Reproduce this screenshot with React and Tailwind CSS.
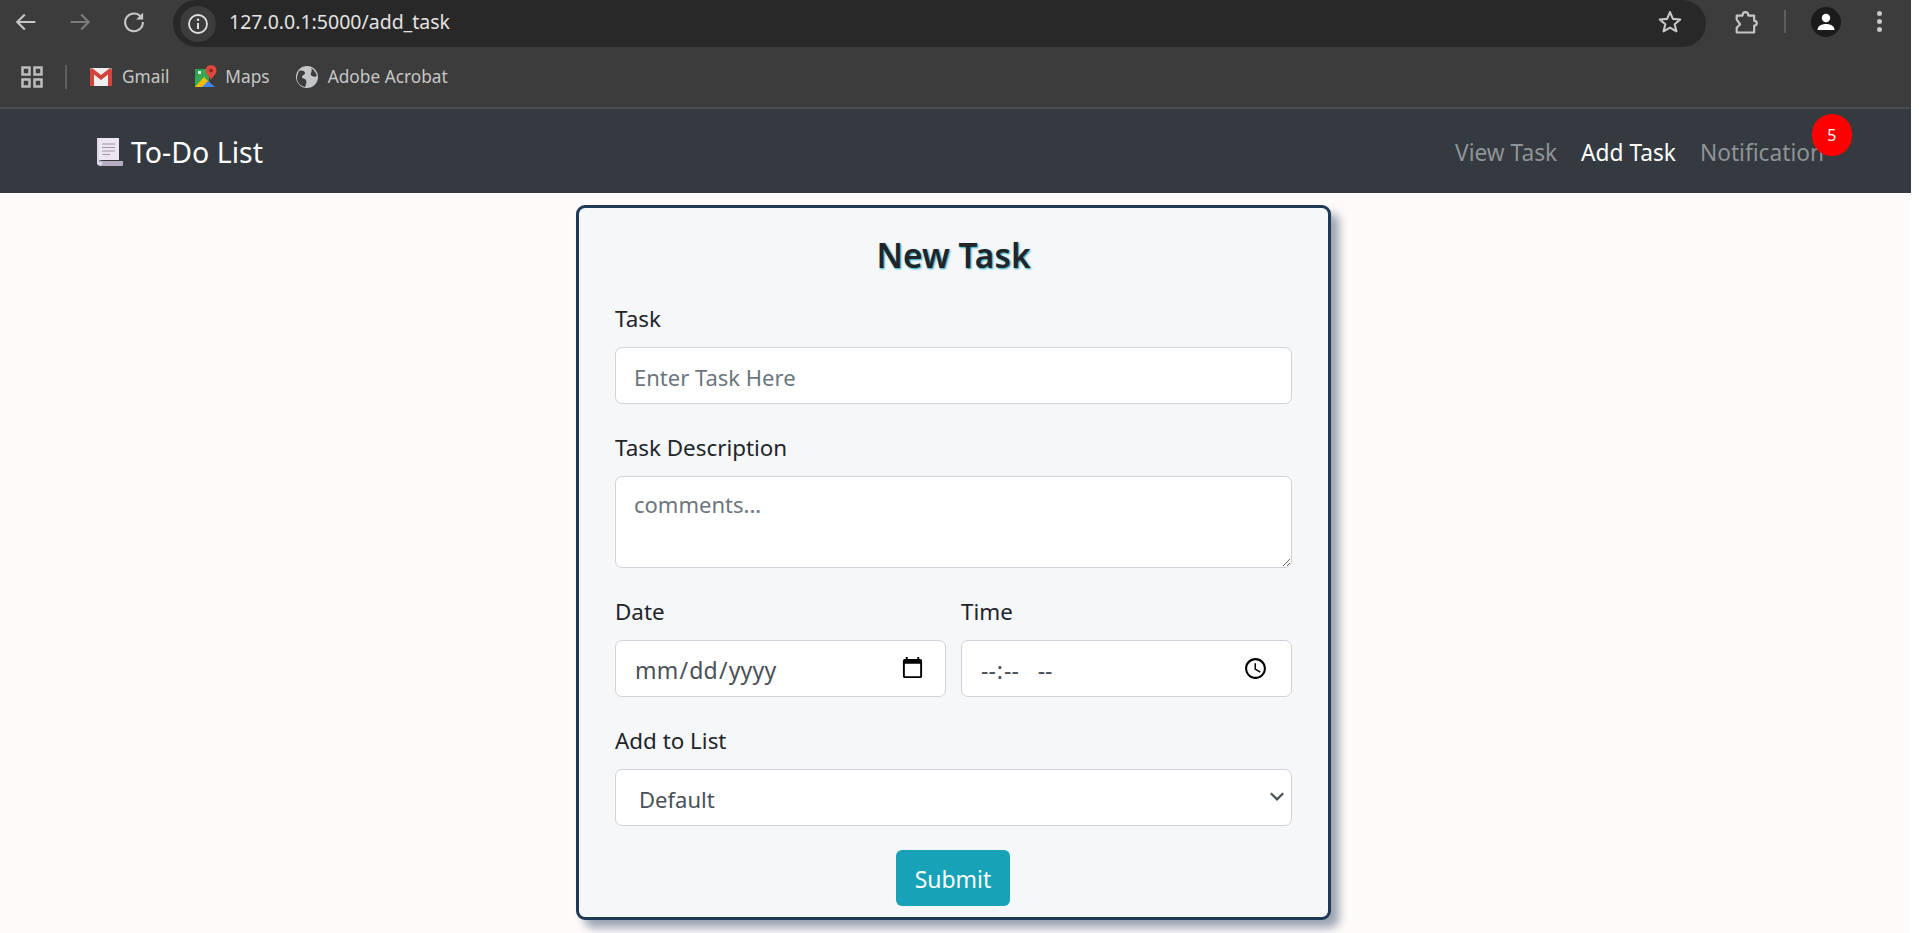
import React from 'react';

function ChromeIcon({ children, className = '' }) {
  return (
    <svg viewBox="0 0 24 24" fill="none" className={className}>
      {children}
    </svg>
  );
}

function Toolbar() {
  return (
    <div className="flex h-[47px] items-start bg-[#3c3c3c]">
      <div className="flex h-[43px] items-center gap-[26px] pl-[12px]">
        <ChromeIcon className="h-[28px] w-[28px] text-[#c7c7c7]">
          <path d="M20 12H5M11 5.500 4.500 12l6.500 6.500" stroke="currentColor" strokeWidth="1.800" />
        </ChromeIcon>
        <ChromeIcon className="h-[28px] w-[28px] text-[#7c7c7c]">
          <path d="M4 12h15M13 5.500l6.500 6.500-6.500 6.500" stroke="currentColor" strokeWidth="1.800" />
        </ChromeIcon>
        <ChromeIcon className="h-[28px] w-[28px] text-[#c7c7c7]">
          <path d="M18.600 8.500A7.600 7.600 0 1 0 19.600 12" stroke="currentColor" strokeWidth="1.800" />
          <path d="M19.800 3.800v6h-6z" fill="currentColor" />
        </ChromeIcon>
      </div>
      <div className="ml-[25px] flex h-[47px] w-[1533px] items-center rounded-[24px] bg-[#282828] pr-[22px]">
        <div className="ml-[7px] flex h-[36px] w-[36px] items-center justify-center rounded-full bg-[#3c3c3c]">
          <ChromeIcon className="h-[24px] w-[24px] text-[#e0e0e0]">
            <circle cx="12" cy="12" r="9" stroke="currentColor" strokeWidth="1.800" />
            <path d="M12 11v6" stroke="currentColor" strokeWidth="2" />
            <circle cx="12" cy="7.800" r="1.300" fill="currentColor" />
          </ChromeIcon>
        </div>
        <span className="ml-[13px] mb-[4px] text-[19.500px] text-[#e3e3e3]">127.0.0.1:5000/add_task</span>
        <ChromeIcon className="ml-auto mb-[4px] h-[28px] w-[28px] text-[#c7c7c7]">
          <path d="m12 3.500 2.500 5.800 6.300.5-4.800 4.100 1.500 6.100L12 16.800l-5.500 3.200L8 13.900 3.200 9.800l6.300-.5z" stroke="currentColor" strokeWidth="1.800" strokeLinejoin="round" />
        </ChromeIcon>
      </div>
      <div className="flex h-[43px] items-center">
        <ChromeIcon className="ml-[26px] h-[28px] w-[28px] text-[#c7c7c7]">
          <path d="M4 6.500h5c0-4 5-4 5 0h5V11c3 0 3 4 0 4v6H4v-4l3-3-3-4z" stroke="currentColor" strokeWidth="1.800" strokeLinejoin="round" />
        </ChromeIcon>
        <div className="ml-[24px] h-[23px] w-[2px] bg-[#5e5e5e]" />
        <div className="ml-[25px] flex h-[30px] w-[30px] items-center justify-center rounded-full bg-[#1b1b1b]">
          <svg viewBox="0 0 24 24" className="h-[24px] w-[24px] text-white" fill="currentColor">
            <circle cx="12" cy="8" r="4.200" />
            <path d="M3.500 20c0-4 4-6 8.500-6s8.500 2 8.500 6z" />
          </svg>
        </div>
        <div className="ml-[36px] flex flex-col gap-[3px]">
          <div className="h-[5px] w-[5px] rounded-full bg-[#c7c7c7]" />
          <div className="h-[5px] w-[5px] rounded-full bg-[#c7c7c7]" />
          <div className="h-[5px] w-[5px] rounded-full bg-[#c7c7c7]" />
        </div>
      </div>
    </div>
  );
}

function Bookmarks() {
  return (
    <div className="flex h-[62px] items-center border-b-2 border-[#4a4d50] bg-[#3c3c3c] text-[17.300px] text-[#c7c7c7]">
      <svg viewBox="0 0 22 22" className="ml-[21px] h-[22px] w-[22px]" fill="none" stroke="#bdbdbd" strokeWidth="2.500">
        <rect x="1.500" y="1.500" width="7" height="7" />
        <rect x="13.500" y="1.500" width="7" height="7" />
        <rect x="1.500" y="13.500" width="7" height="7" />
        <rect x="13.500" y="13.500" width="7" height="7" />
      </svg>
      <div className="ml-[22px] h-[24px] w-[2px] bg-[#5e5e5e]" />
      <svg viewBox="0 0 22 18" className="ml-[23px] h-[18px] w-[22px]">
        <rect width="22" height="18" rx="2" fill="#efefef" />
        <path d="M0 2v16h4V6.500L11 12l7-5.500V18h4V2l-2-2-9 7-9-7z" fill="#d2453a" />
      </svg>
      <span className="ml-[10px]">Gmail</span>
      <svg viewBox="0 0 22 24" className="ml-[26px] h-[24px] w-[22px]">
        <path d="M0 4h14v18H0z" fill="#34a853" />
        <path d="M0 22 9 12l5 5v5z" fill="#fbbc04" />
        <path d="m7 22 6-6 7 6z" fill="#4285f4" />
        <path d="M0 4h9L0 13z" fill="#2e9e50" />
        <rect x="3" y="6" width="3" height="3" fill="#d6efdc" />
        <path d="M16 0a5.500 5.500 0 0 1 5.500 5.500C21.500 9 18 11 16 15c-2-4-5.500-6-5.500-9.500A5.500 5.500 0 0 1 16 0z" fill="#e0483d" />
        <circle cx="16" cy="5.500" r="2" fill="#8e2a23" />
      </svg>
      <span className="ml-[8px]">Maps</span>
      <svg viewBox="0 0 22 22" className="ml-[26px] h-[22px] w-[22px]">
        <circle cx="11" cy="11" r="11" fill="#c4c7c9" />
        <path d="M3 5c3-1 6 0 6 2s-3 2-3 4 3 1 4 3 0 5-1 7c-4-1-7-3-8-8 0-3 1-6 2-8zM15 2c2 1 5 4 6 8-2 1-5 1-6-1s2-4 0-7z" fill="#3c3c3c" />
      </svg>
      <span className="ml-[10px]">Adobe Acrobat</span>
    </div>
  );
}

function Navbar() {
  return (
    <nav className="flex h-[84px] items-center bg-[#343a40] pl-[96px] pr-[87px] pt-[3px]">
      <svg viewBox="0 0 27 30" className="mb-[2px] h-[30px] w-[27px]">
        <path d="M1 1h22v22h-22z" fill="#ece6f2" />
        <path d="M1 22c0 4 1 7 4 7h21c1 0 1-1 1-2v-3H7c-2 0-4-1-6-2z" fill="#b6aec0" />
        <path d="M1 1v26c1 1 2 2 4 2l2-4H3V2z" fill="#ddd6e6" />
        <path d="M6 7h13M6 10.500h13M6 14h13M6 17.500h8" stroke="#9d97a6" strokeWidth="1.200" />
      </svg>
      <span className="ml-[8px] text-[28.500px] text-white">To-Do List</span>
      <div className="ml-auto flex items-center gap-[24px] pt-[2px] text-[22.700px] text-[#8f9396]">
        <span>View Task</span>
        <span className="text-white">Add Task</span>
        <span className="relative">
          Notification
          <span className="absolute left-[112px] top-[-22px] flex h-[42px] w-[40px] items-center justify-center rounded-full bg-[#ff0000] text-[16px] text-white">5</span>
        </span>
      </div>
    </nav>
  );
}

const labelClass = 'mb-[12px] block h-[34px] text-[22.400px] leading-[36px] text-[#212529]';
const fieldClass = 'block w-full rounded-[7px] border border-[#ced4da] bg-white px-[18px] text-[22px] text-[#495057] outline-none placeholder:text-[#6c757d]';
const pickerClass = '[&::-webkit-calendar-picker-indicator]:mb-[4px] [&::-webkit-calendar-picker-indicator]:h-[25px] [&::-webkit-calendar-picker-indicator]:w-[25px] [&::-webkit-calendar-picker-indicator]:p-0';

function TaskForm() {
  return (
    <form className="ml-[576px] mt-[12px] h-[715px] w-[755px] rounded-[9px] border-[3px] border-[#1f3a56] bg-[#f6f7f9] px-[36px] shadow-[8px_8px_10px_rgba(31,58,86,0.45)]">
      <h2 className="flex h-[93px] items-start justify-center pt-[22px] text-[33.500px] font-semibold leading-[50px] text-[#212529] [text-shadow:1px_1px_2px_#17a2b8]">
        New Task
      </h2>
      <div className="flex flex-col gap-[26px]">
        <div>
          <label className={labelClass}>Task</label>
          <input type="text" placeholder="Enter Task Here" className={`${fieldClass} h-[57px] pt-[2px]`} />
        </div>
        <div>
          <label className={labelClass}>Task Description</label>
          <textarea placeholder="comments..." className={`${fieldClass} h-[92px] py-[11px] text-[21.700px]`} />
        </div>
        <div className="flex gap-[15px]">
          <div className="flex-1">
            <label className={labelClass}>Date</label>
            <input
              type="date"
              className={`${fieldClass} ${pickerClass} h-[57px] pt-[4px] text-[23px] tracking-[0.200px] [&::-webkit-calendar-picker-indicator]:mr-[2px]`}
            />
          </div>
          <div className="flex-1">
            <label className={labelClass}>Time</label>
            <input
              type="time"
              className={`${fieldClass} ${pickerClass} h-[57px] pt-[4px] text-[23px] tracking-[2.500px] [&::-webkit-calendar-picker-indicator]:mr-[5px] [&::-webkit-datetime-edit-ampm-field]:ml-[13px]`}
            />
          </div>
        </div>
        <div>
          <label className={labelClass}>Add to List</label>
          <div className="relative">
            <select className={`${fieldClass} h-[57px] appearance-none px-[23px] pt-[3px]`}>
              <option>Default</option>
            </select>
            <svg viewBox="0 0 16 16" className="absolute right-[6px] top-[18px] h-[18px] w-[18px]" fill="none" stroke="#4b5158" strokeWidth="2">
              <path d="m2.500 5.500 5.500 5.500 5.500-5.500" />
            </svg>
          </div>
        </div>
      </div>
      <div className="mt-[24px] flex justify-center pr-[1px]">
        <button type="button" className="h-[56px] w-[114px] rounded-[6px] bg-[#17a2b8] pt-[3px] text-[23px] text-white">Submit</button>
      </div>
    </form>
  );
}

export default function App() {
  return (
    <div className="h-[933px] w-[1919px] overflow-hidden bg-white font-['Noto_Sans',sans-serif]">
      <div className="h-[933px] w-[1911px] bg-[#fffbfa]">
        <Toolbar />
        <Bookmarks />
        <Navbar />
        <TaskForm />
      </div>
    </div>
  );
}
